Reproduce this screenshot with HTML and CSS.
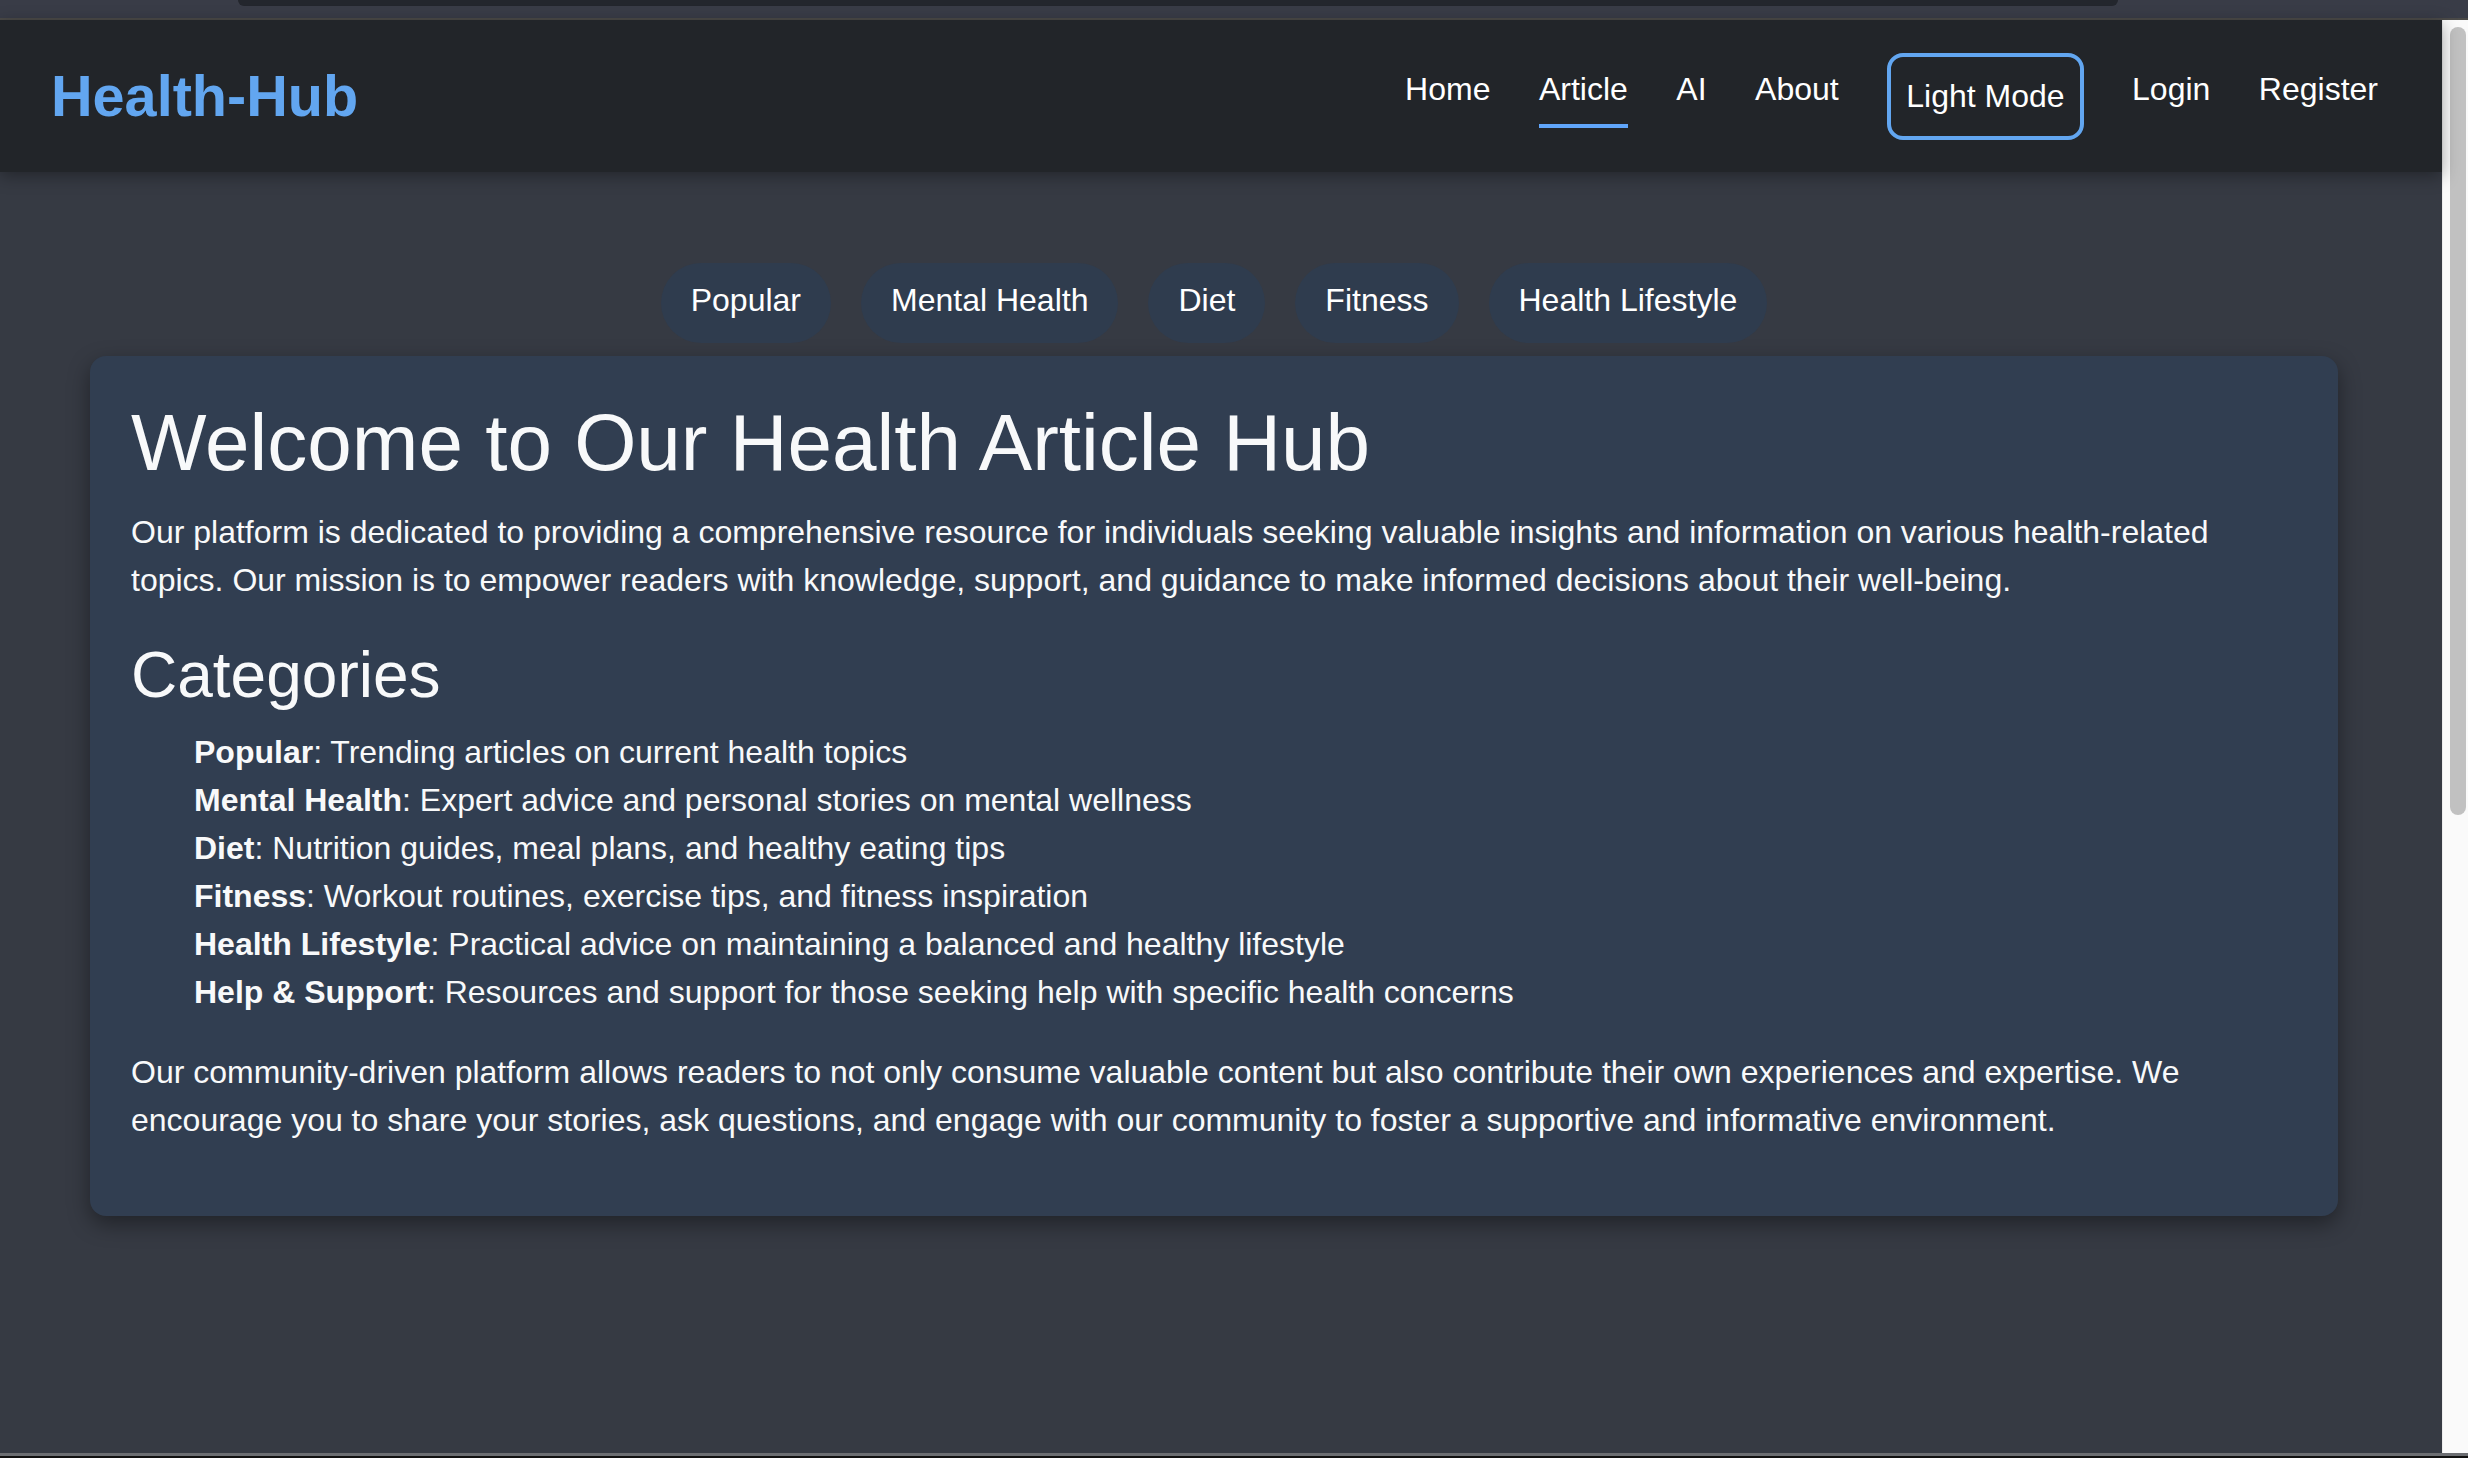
FILE: index.html
```html
<!DOCTYPE html>
<html lang="en">
<head>
<meta charset="utf-8">
<title>Health-Hub</title>
<link rel="stylesheet" href="styles.css">
</head>
<body>
<div class="frame">
  <div class="chrome-top"><div class="chrome-tab"></div></div>
  <div class="chrome-line"></div>
  <div class="window">
    <div class="page">
      <header class="site-header">
        <div class="logo">Health-Hub</div>
        <nav class="nav">
          <a class="nav-link">Home</a>
          <a class="nav-link active">Article</a>
          <a class="nav-link">AI</a>
          <a class="nav-link">About</a>
          <button class="mode-btn">Light Mode</button>
          <a class="nav-link">Login</a>
          <a class="nav-link">Register</a>
        </nav>
      </header>
      <main class="main">
        <div class="pills">
          <span class="pill">Popular</span>
          <span class="pill">Mental Health</span>
          <span class="pill">Diet</span>
          <span class="pill">Fitness</span>
          <span class="pill">Health Lifestyle</span>
        </div>
        <section class="card">
          <h1 class="title">Welcome to Our Health Article Hub</h1>
          <p class="intro">Our platform is dedicated to providing a comprehensive resource for individuals seeking valuable insights and information on various health-related topics. Our mission is to empower readers with knowledge, support, and guidance to make informed decisions about their well-being.</p>
          <h2 class="subtitle">Categories</h2>
          <ul class="cat-list">
            <li><strong>Popular</strong>: Trending articles on current health topics</li>
            <li><strong>Mental Health</strong>: Expert advice and personal stories on mental wellness</li>
            <li><strong>Diet</strong>: Nutrition guides, meal plans, and healthy eating tips</li>
            <li><strong>Fitness</strong>: Workout routines, exercise tips, and fitness inspiration</li>
            <li><strong>Health Lifestyle</strong>: Practical advice on maintaining a balanced and healthy lifestyle</li>
            <li><strong>Help &amp; Support</strong>: Resources and support for those seeking help with specific health concerns</li>
          </ul>
          <p class="outro">Our community-driven platform allows readers to not only consume valuable content but also contribute their own experiences and expertise. We encourage you to share your stories, ask questions, and engage with our community to foster a supportive and informative environment.</p>
        </section>
      </main>
    </div>
    <div class="scrollbar"><div class="thumb"></div></div>
  </div>
  <div class="chrome-bottom"></div>
</div>
</body>
</html>
```

FILE: styles.css
```css
* { box-sizing: border-box; }

html, body {
  margin: 0;
  padding: 0;
  height: 100%;
  overflow: hidden;
  background: #363a43;
}

body {
  font-family: "Liberation Sans", Arial, sans-serif;
  color: #f8f9fa;
}

.frame {
  display: flex;
  flex-direction: column;
  width: 2468px;
  height: 1458px;
}

.chrome-top {
  height: 18px;
  background: #393c47;
  padding-left: 238px;
  flex: none;
}

.chrome-tab {
  width: 1880px;
  height: 6px;
  background: #23262d;
  border-radius: 0 0 10px 10px;
}

.chrome-line {
  height: 2px;
  background: #4b4a48;
  flex: none;
}

.window {
  flex: 1;
  display: flex;
  min-height: 0;
}

.page {
  flex: 1;
  display: flex;
  flex-direction: column;
  background: #363a43;
  min-width: 0;
}

.scrollbar {
  width: 26px;
  flex: none;
  background: #fafafa;
  border-left: 1px solid #ececec;
  padding: 7px 2px 0 7px;
}

.thumb {
  width: 16px;
  height: 788px;
  background: #c1c1c1;
  border-radius: 8px;
}

.chrome-bottom {
  height: 5px;
  flex: none;
  background: #111;
  border-top: 3px solid #6c6e72;
}

/* header */
.site-header {
  height: 152px;
  flex: none;
  display: flex;
  align-items: center;
  justify-content: space-between;
  padding: 0 64px 0 51px;
  background: #222529;
  box-shadow: 0 4px 16px rgba(0, 0, 0, 0.35);
  position: relative;
  z-index: 1;
}

.logo {
  font-size: 57.6px;
  font-weight: 700;
  color: #62a6f0;
  line-height: 66px;
}

.nav {
  display: flex;
  align-items: center;
  gap: 48.5px;
}

.nav-link {
  font-size: 32px;
  line-height: 37px;
  color: #ffffff;
  padding: 6px 0 16px;
  border-bottom: 4px solid transparent;
  cursor: pointer;
}

.nav-link.active {
  border-bottom-color: #60a5fa;
}

.mode-btn {
  font-family: "Liberation Sans", Arial, sans-serif;
  font-size: 32px;
  line-height: 37px;
  color: #ffffff;
  background: transparent;
  border: 4px solid #62a6f0;
  border-radius: 16px;
  padding: 21px 15px;
  margin: 0;
}

/* main */
.main {
  padding: 91px 104px 0 90px;
}

.pills {
  display: flex;
  justify-content: center;
  gap: 30px;
  margin-bottom: 13px;
}

.pill {
  font-size: 32px;
  line-height: 38px;
  padding: 18px 30px 24px;
  background: #2f3c4e;
  border-radius: 40px;
  color: #ffffff;
}

.card {
  background: #313e51;
  border-radius: 16px;
  padding: 40px 40px 40px 41px;
  box-shadow: 0 8px 22px rgba(0, 0, 0, 0.4);
}

.title {
  font-size: 80px;
  font-weight: 400;
  line-height: 92px;
  margin: 1px 0 19px;
}

.intro,
.outro {
  font-size: 32px;
  line-height: 48px;
  margin: 0 0 34px;
}

.outro {
  margin-bottom: 32px;
}

.subtitle {
  font-size: 64px;
  font-weight: 400;
  line-height: 74px;
  margin: 0 0 16px;
}

.cat-list {
  list-style: none;
  margin: 0 0 32px;
  padding-left: 63px;
  font-size: 32px;
  line-height: 48px;
}

.cat-list strong {
  font-weight: 700;
}
```
